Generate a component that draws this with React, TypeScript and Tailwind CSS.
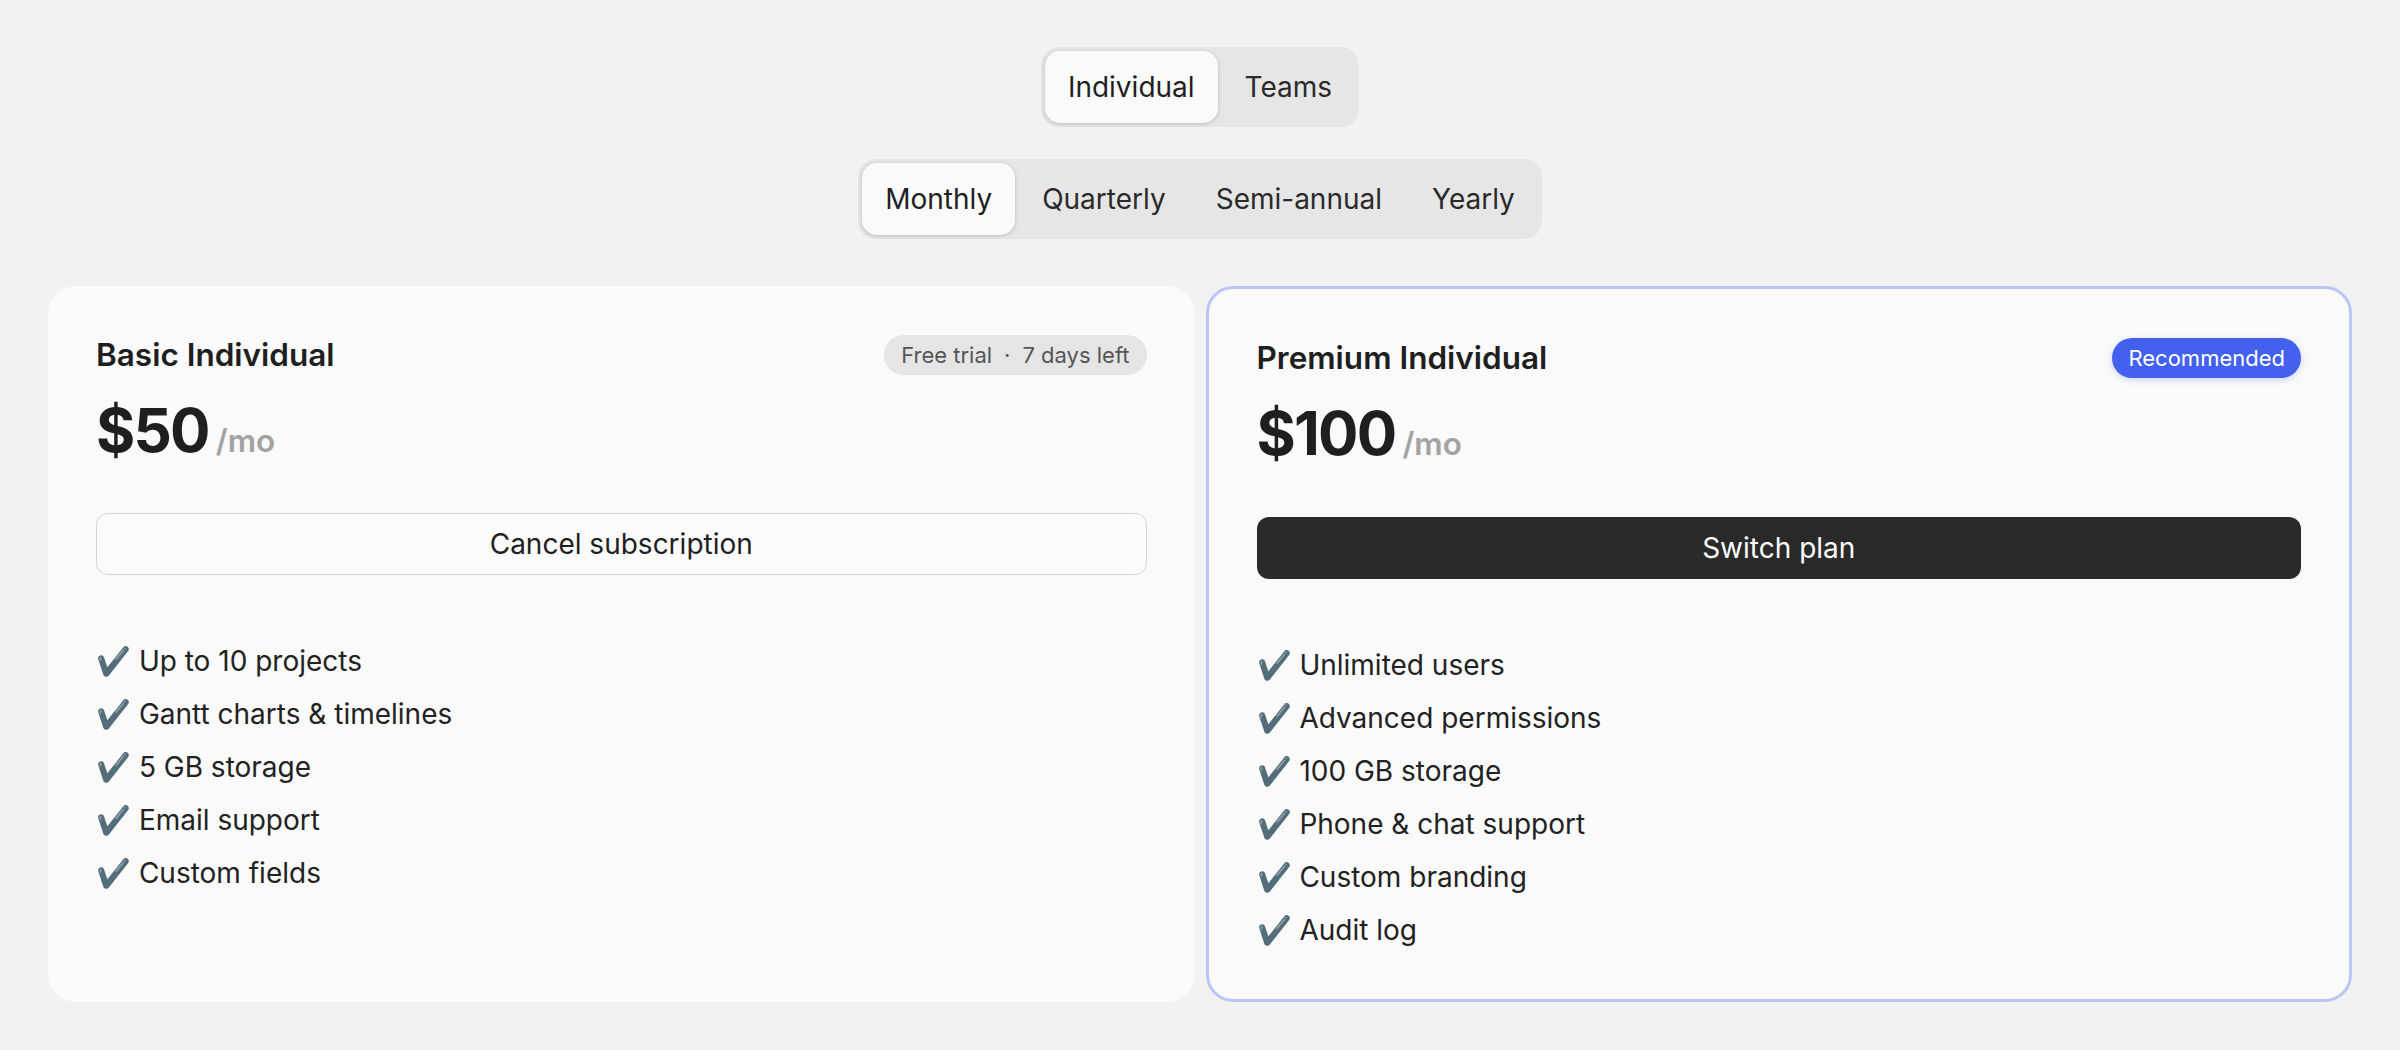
import { useState } from "react";

const audiences = ["Individual", "Teams"];
const periods = ["Monthly", "Quarterly", "Semi-annual", "Yearly"];

const basicFeatures = [
  "Up to 10 projects",
  "Gantt charts & timelines",
  "5 GB storage",
  "Email support",
  "Custom fields",
];

const premiumFeatures = [
  "Unlimited users",
  "Advanced permissions",
  "100 GB storage",
  "Phone & chat support",
  "Custom branding",
  "Audit log",
];

function Segmented({
  items,
  value,
  onChange,
}: {
  items: string[];
  value: string;
  onChange: (v: string) => void;
}) {
  return (
    <div className="flex gap-[4px] rounded-[18px] bg-[#e6e6e6] p-[4px]">
      {items.map((item) => (
        <button
          key={item}
          onClick={() => onChange(item)}
          className={
            item === value
              ? "rounded-[15px] bg-[#fafafa] px-[23px] py-[16px] text-[28px] leading-[40px] text-[#1f1f1f] shadow-[0_1px_4px_rgba(0,0,0,0.18)]"
              : "rounded-[15px] px-[23px] py-[16px] text-[28px] leading-[40px] text-[#2a2a2a]"
          }
        >
          {item}
        </button>
      ))}
    </div>
  );
}

function Features({ items }: { items: string[] }) {
  return (
    <ul className="mt-[66px] flex flex-col gap-[12px] text-[28px] leading-[41px] text-[#222222]">
      {items.map((f) => (
        <li key={f}>✔️ {f}</li>
      ))}
    </ul>
  );
}

function Price({ amount }: { amount: string }) {
  return (
    <div className="mt-[24px] flex items-baseline gap-[7px]">
      <span className="text-[60px] font-bold leading-[60px] tracking-[-0.03em]">{amount}</span>
      <span className="text-[31.5px] font-semibold text-[#a3a3a3]">/mo</span>
    </div>
  );
}

export default function App() {
  const [audience, setAudience] = useState("Individual");
  const [period, setPeriod] = useState("Monthly");

  return (
    <main className="min-h-screen bg-[#f2f2f2] px-[48px] pt-[47px] pb-[48px] font-['Inter',sans-serif] text-[#1f1f1f]">
      {/* toggles */}
      <div className="flex flex-col items-center gap-[32px]">
        <Segmented items={audiences} value={audience} onChange={setAudience} />
        <Segmented items={periods} value={period} onChange={setPeriod} />
      </div>

      {/* plans */}
      <div className="mt-[47px] grid grid-cols-2 gap-[11px]">
        <section className="rounded-[27px] bg-[#fafafa] p-[48px]">
          <div className="flex items-center justify-between">
            <h2 className="text-[31.5px] font-semibold leading-[42px]">Basic Individual</h2>
            <span className="flex items-center gap-[12px] rounded-full bg-[#e5e5e5] px-[17px] py-[8px] text-[22px] leading-[24px] text-[#555555]">
              <span>Free trial</span>
              <span>·</span>
              <span>7 days left</span>
            </span>
          </div>
          <Price amount="$50" />
          <button className="mt-[49px] h-[62px] w-full rounded-[12px] border-[1.5px] border-[#d6d6d6] bg-[#fbfbfb] text-[28px] text-[#1f1f1f]">
            Cancel subscription
          </button>
          <Features items={basicFeatures} />
        </section>

        <section className="rounded-[27px] border-[3px] border-[#bcc6f6] bg-[#fafafa] p-[48px]">
          <div className="flex items-center justify-between">
            <h2 className="text-[31.5px] font-semibold leading-[42px]">Premium Individual</h2>
            <span className="rounded-full bg-[#4361ee] px-[16px] py-[8px] text-[22px] leading-[24px] text-white shadow-[0_2px_6px_rgba(67,97,238,0.25)]">
              Recommended
            </span>
          </div>
          <Price amount="$100" />
          <button className="mt-[50px] h-[62px] w-full rounded-[12px] bg-[#2a2a2a] text-[28px] text-white">
            Switch plan
          </button>
          <Features items={premiumFeatures} />
        </section>
      </div>
    </main>
  );
}
